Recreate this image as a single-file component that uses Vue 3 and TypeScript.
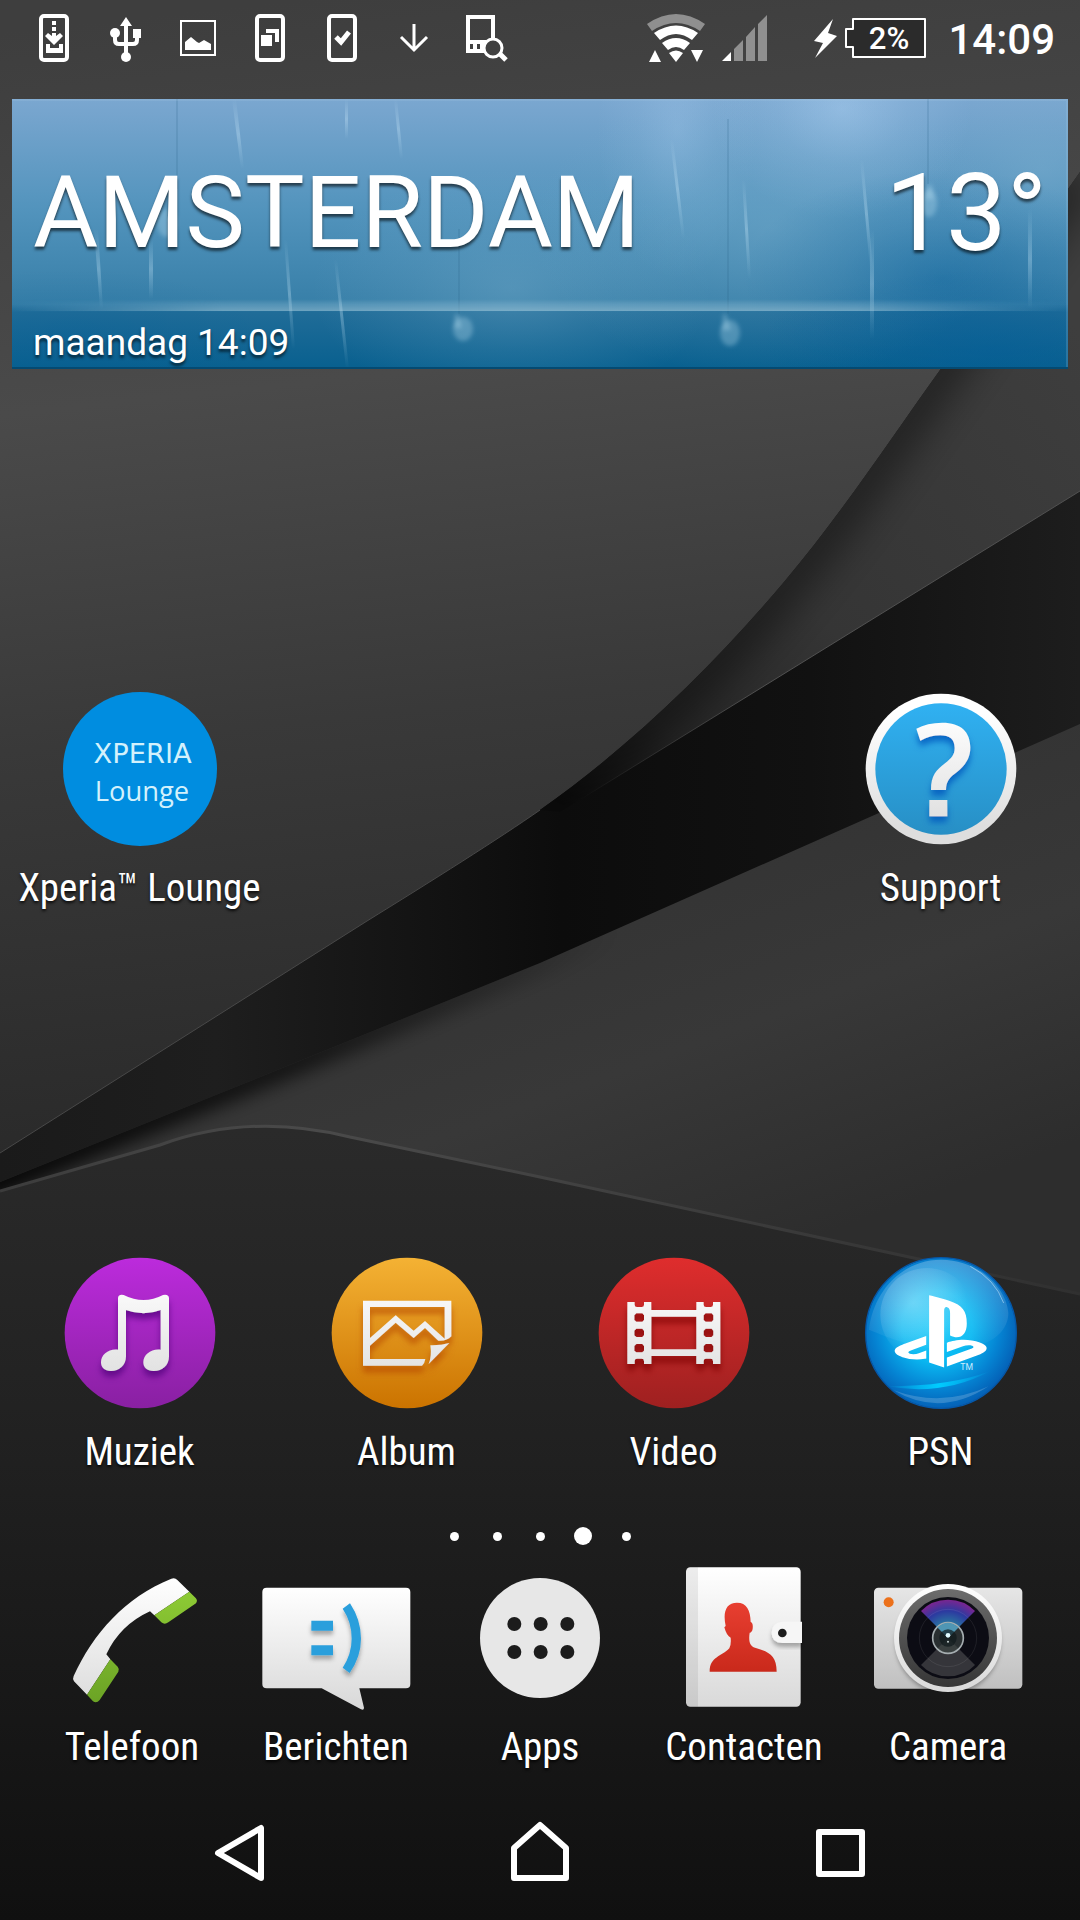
<script setup lang="ts">
import { ref } from 'vue'

const city = 'AMSTERDAM'
const temperature = '13°'
const day = 'maandag 14:09'
const clock = '14:09'
const pages = [1, 2, 3, 4, 5]
const activePage = ref(4)
</script>

<template>
  <div class="phone">
    <svg class="wallpaper" viewBox="0 0 1080 1920" preserveAspectRatio="none" aria-hidden="true">
      <defs>
        <linearGradient id="wpLeft" gradientUnits="userSpaceOnUse" x1="300" y1="0" x2="420" y2="1150">
          <stop offset="0" stop-color="#3e3e3e" />
          <stop offset=".33" stop-color="#4a4a4a" />
          <stop offset=".62" stop-color="#393939" />
          <stop offset="1" stop-color="#292929" />
        </linearGradient>
        <linearGradient id="wpMid" gradientUnits="userSpaceOnUse" x1="1080" y1="330" x2="560" y2="800">
          <stop offset="0" stop-color="#3e3e3e" />
          <stop offset=".55" stop-color="#353535" />
          <stop offset=".82" stop-color="#262626" />
          <stop offset="1" stop-color="#0d0d0d" />
        </linearGradient>
        <linearGradient id="wpBand" gradientUnits="userSpaceOnUse" x1="0" y1="0" x2="1080" y2="0">
          <stop offset="0" stop-color="#1a1a1a" />
          <stop offset=".2" stop-color="#1e1e1e" />
          <stop offset=".52" stop-color="#0c0c0c" />
          <stop offset=".75" stop-color="#111" />
          <stop offset="1" stop-color="#1d1d1d" />
        </linearGradient>
        <linearGradient id="wpLow" gradientUnits="userSpaceOnUse" x1="560" y1="900" x2="700" y2="1280">
          <stop offset="0" stop-color="#343434" />
          <stop offset=".45" stop-color="#383838" />
          <stop offset="1" stop-color="#2d2d2d" />
        </linearGradient>
        <linearGradient id="wpShade" gradientUnits="userSpaceOnUse" x1="0" y1="0" x2="620" y2="0">
          <stop offset="0" stop-color="#000" stop-opacity=".9" />
          <stop offset=".5" stop-color="#000" stop-opacity=".6" />
          <stop offset="1" stop-color="#000" stop-opacity="0" />
        </linearGradient>
        <linearGradient id="wpLine" gradientUnits="userSpaceOnUse" x1="580" y1="0" x2="760" y2="0">
          <stop offset="0" stop-color="#505050" stop-opacity="0" />
          <stop offset="1" stop-color="#505050" />
        </linearGradient>
        <linearGradient id="wpBottom" gradientUnits="userSpaceOnUse" x1="0" y1="1130" x2="0" y2="1920">
          <stop offset="0" stop-color="#2a2a2a" />
          <stop offset=".35" stop-color="#222" />
          <stop offset="1" stop-color="#101010" />
        </linearGradient>
        <linearGradient id="wpRim" x1="0" y1="0" x2="1" y2="0">
          <stop offset="0" stop-color="#3c3c3c" />
          <stop offset=".3" stop-color="#4a4a4a" />
          <stop offset="1" stop-color="#303030" />
        </linearGradient>
        <filter id="wpSoft" x="-20%" y="-20%" width="140%" height="140%"><feGaussianBlur stdDeviation="20" /></filter>
        <filter id="wpSoft2" x="-20%" y="-20%" width="140%" height="140%"><feGaussianBlur stdDeviation="9" /></filter>
        <clipPath id="clipMid"><path d="M1080 172L940 370C892 437 842 513 784 582C715 664 630 747 540 810L560 812 1080 491Z" /></clipPath>
        <clipPath id="clipLow"><path d="M1080 724L540 963 270 1073 0 1182V1320H1080Z" /></clipPath>
      </defs>
      <rect width="1080" height="1920" fill="url(#wpLeft)" />
      <path d="M0 1153L367 921C430 882 500 838 540 810C630 747 715 664 784 582C842 513 892 437 940 370L1080 172V800L0 1195Z" fill="url(#wpBand)" />
      <g clip-path="url(#clipMid)">
        <rect x="500" y="160" width="580" height="680" fill="url(#wpMid)" />
        <path d="M1080 172L940 370C892 437 842 513 784 582C715 664 630 747 540 810" fill="none" stroke="#000" stroke-opacity=".45" stroke-width="44" filter="url(#wpSoft)" />
      </g>
      <path d="M0 1153L367 921C430 882 500 838 540 810" fill="none" stroke="#484848" stroke-width="1" />
      <path d="M560 812L1080 491" fill="none" stroke="url(#wpLine)" stroke-width="1" />
      <path d="M1080 724L540 963 270 1073 0 1182V1320H1080Z" fill="url(#wpLow)" />
      <g clip-path="url(#clipLow)">
        <path d="M700 892L540 963 270 1073 -20 1190" fill="none" stroke="url(#wpShade)" stroke-width="26" filter="url(#wpSoft2)" />
      </g>
      <path d="M0 1191L160 1145Q250 1112 350 1137L540 1177 1080 1294V1920H0Z" fill="url(#wpBottom)" />
      <path d="M0 1191L160 1145Q250 1112 350 1137L540 1177 1080 1294" fill="none" stroke="url(#wpRim)" stroke-width="3" />
    </svg>

    <header class="status">
      <div class="notices">
        <svg viewBox="0 0 48 48" role="img" aria-label="Download naar telefoon">
          <rect x="11" y="2" width="26" height="44" rx="3" fill="none" stroke="#fff" stroke-width="4" />
          <path d="M22 7h4v4h-4zM22 13h4v4h-4zM22 19h4v3l4-3 3 3-9 9-9-9 3-3 4 3zM16 30h4v4h9v-4h4v9H16z" fill="#fff" />
        </svg>
        <svg viewBox="0 0 48 48" role="img" aria-label="USB">
          <path d="M24 3l6 9h-4v30h-4V12h-4z" fill="#fff" />
          <path d="M13 19v7q0 4 4 4h14q4 0 4-4v-7" fill="none" stroke="#fff" stroke-width="4" />
          <circle cx="13" cy="19" r="5" fill="#fff" /><path d="M31 15h8v9h-8z" fill="#fff" /><circle cx="24" cy="43" r="5" fill="#fff" />
        </svg>
        <svg viewBox="0 0 48 48" role="img" aria-label="Schermafbeelding">
          <rect x="7" y="7" width="34" height="34" fill="none" stroke="#fff" stroke-width="2" />
          <path d="M11 36v-8l6-5 6 5 2 1 5-3 7 4v6z" fill="#fff" />
        </svg>
        <svg viewBox="0 0 48 48" role="img" aria-label="Vensters">
          <rect x="11" y="2" width="26" height="44" rx="3" fill="none" stroke="#fff" stroke-width="4" />
          <path d="M15 21h11v11H15zM20 15h13v13h-4v-9h-9z" fill="#fff" />
        </svg>
        <svg viewBox="0 0 48 48" role="img" aria-label="Voltooid">
          <rect x="11" y="2" width="26" height="44" rx="3" fill="none" stroke="#fff" stroke-width="4" />
          <path d="M18 23l5 5 8-10" fill="none" stroke="#fff" stroke-width="5" />
        </svg>
        <svg viewBox="0 0 48 48" role="img" aria-label="Download">
          <path d="M24 10v26M11 23l13 13 13-13" fill="none" stroke="#fff" stroke-width="3" />
        </svg>
        <svg viewBox="0 0 48 48" role="img" aria-label="Apparaat zoeken">
          <path d="M31 25V3H6v34h17M4 28h20M13 28v9M20 28v9" fill="none" stroke="#fff" stroke-width="4" />
          <circle cx="31" cy="34" r="9" fill="none" stroke="#fff" stroke-width="3" />
          <path d="M38 40l6 6" stroke="#fff" stroke-width="5" />
        </svg>
      </div>
      <div class="indicators">
        <svg class="wifi" viewBox="0 0 60 50" role="img" aria-label="Wifi">
          <path d="M1 11Q30-9 59 11L54 18Q30 2 6 18Z" fill="#8f8f8f" />
          <path d="M8 20Q30 5 52 20L46 27Q30 15 14 27ZM16 30Q30 20 44 30L38 37Q30 31 22 37ZM23 40Q30 35 37 40L30 49ZM3 49l6-12 6 12zM45 37h12l-6 12z" fill="#fff" />
        </svg>
        <svg class="signal" viewBox="0 0 46 46" role="img" aria-label="Mobiel signaal">
          <path d="M0 46L9 37V46Z" fill="#fff" />
          <path d="M12 46V34L21 25V46ZM24 46V22L33 12V46ZM36 46V9L45 0V46Z" fill="#909090" />
        </svg>
        <svg class="bolt" viewBox="0 0 23 39" role="img" aria-label="Opladen"><path d="M19 0L0 22l9 2L1 39 23 17l-9-3z" fill="#fff" /></svg>
        <svg class="battery" viewBox="0 0 82 40" role="img" aria-label="Batterij 2%">
          <path d="M8 1H80V39H8V29H1V11H8Z" fill="#2b2b2b" stroke="#fff" stroke-width="2" stroke-linejoin="round" />
          <text x="44" y="31" text-anchor="middle">2%</text>
        </svg>
        <time class="clock">{{ clock }}</time>
      </div>
    </header>

    <main class="workspace">
      <section class="weather">
        <svg class="rain" viewBox="0 0 1056 270" preserveAspectRatio="none" aria-hidden="true">
          <defs>
            <linearGradient id="sky" x1="0" y1="0" x2="0" y2="1">
              <stop offset="0" stop-color="#7ba7d0" /><stop offset=".4" stop-color="#5394bd" />
              <stop offset=".76" stop-color="#377fa8" /><stop offset=".79" stop-color="#206c98" /><stop offset="1" stop-color="#08608f" />
            </linearGradient>
            <radialGradient id="glow"><stop offset="0" stop-color="#a9cdf0" stop-opacity=".55" /><stop offset=".5" stop-color="#a9cdf0" stop-opacity=".2" /><stop offset="1" stop-color="#a9cdf0" stop-opacity="0" /></radialGradient>
            <radialGradient id="mist"><stop offset="0" stop-color="#7fb2cf" stop-opacity=".35" /><stop offset=".5" stop-color="#7fb2cf" stop-opacity=".15" /><stop offset="1" stop-color="#7fb2cf" stop-opacity="0" /></radialGradient>
            <radialGradient id="deep"><stop offset="0" stop-color="#005b97" stop-opacity=".4" /><stop offset=".5" stop-color="#005b97" stop-opacity=".16" /><stop offset="1" stop-color="#005b97" stop-opacity="0" /></radialGradient>
            <linearGradient id="streak" x1="0" y1="0" x2="0" y2="1"><stop offset="0" stop-color="#d5f0ff" stop-opacity="0" /><stop offset=".5" stop-color="#d5f0ff" stop-opacity=".3" /><stop offset="1" stop-color="#d5f0ff" stop-opacity="0" /></linearGradient>
            <linearGradient id="shine" x1="0" y1="0" x2="0" y2="1"><stop offset="0" stop-color="#b8d8e6" stop-opacity="0" /><stop offset="1" stop-color="#b8d8e6" stop-opacity=".5" /></linearGradient>
            <linearGradient id="fade" x1="0" y1="0" x2="1" y2="0"><stop offset="0" stop-color="#fff" stop-opacity="0" /><stop offset=".2" stop-color="#fff" /><stop offset=".8" stop-color="#fff" /><stop offset="1" stop-color="#fff" stop-opacity="0" /></linearGradient>
            <mask id="fadeMask"><rect width="1056" height="270" fill="url(#fade)" /></mask>
            <filter id="dropSoft" x="-10%" y="-10%" width="120%" height="120%"><feGaussianBlur stdDeviation="2" /></filter>
          </defs>
          <rect width="1056" height="270" fill="url(#sky)" />
          <ellipse cx="830" cy="10" rx="130" ry="110" fill="url(#glow)" />
          <ellipse cx="665" cy="30" rx="80" ry="150" fill="url(#glow)" opacity=".6" />
          <ellipse cx="500" cy="190" rx="200" ry="120" fill="url(#mist)" />
          <ellipse cx="760" cy="130" rx="240" ry="150" fill="url(#mist)" />
          <ellipse cx="1030" cy="70" rx="110" ry="90" fill="url(#mist)" />
          <ellipse cx="930" cy="180" rx="200" ry="110" fill="url(#deep)" />
          <ellipse cx="980" cy="250" rx="240" ry="80" fill="url(#deep)" />
          <ellipse cx="60" cy="240" rx="200" ry="70" fill="url(#deep)" opacity=".6" />
          <g>
            <path fill="url(#streak)" d="M220 0h4l8 70h-3z" /><path fill="url(#streak)" d="M382 0h3l6 60h-3z" />
            <path fill="url(#streak)" d="M82 130h4l5 80h-3z" /><path fill="url(#streak)" d="M137 140h4v60h-4z" />
            <path fill="url(#streak)" d="M658 40h3l12 100h-3z" /><path fill="url(#streak)" d="M730 80h3l6 100h-3z" />
            <path fill="url(#streak)" d="M848 60h3l10 110h-3z" /><path fill="url(#streak)" d="M858 130h4v110h-4z" />
            <path fill="url(#streak)" d="M272 140h3l8 110h-3z" /><path fill="url(#streak)" d="M322 160h3l12 110h-3z" />
            <path fill="url(#streak)" d="M1016 110h4v100h-4z" /><path fill="url(#streak)" d="M333 0h3v40h-3z" />
          </g>
          <path d="M165 0V90M447 130V215M716 20V215M916 0V85" stroke="#235e83" stroke-opacity=".16" stroke-width="2" />
          <g fill="#bfe3f5" fill-opacity=".3" filter="url(#dropSoft)">
            <ellipse cx="451" cy="230" rx="10" ry="12" /><ellipse cx="718" cy="234" rx="10" ry="13" />
            <ellipse cx="917" cy="104" rx="8" ry="14" /><ellipse cx="155" cy="124" rx="10" ry="14" />
            <path d="M443 215h3l4 14h-8zM711 215h3l5 16h-9zM916 86h4l2 14h-8z" />
          </g>
          <rect y="200" width="1056" height="12" fill="url(#shine)" mask="url(#fadeMask)" />
          <path d="M20 213H1030" stroke="#124767" stroke-width="1" mask="url(#fadeMask)" />
          <path d="M0 1H1056M1055 0V270" stroke="#a8cce6" stroke-opacity=".2" stroke-width="2" />
          <path d="M0 269H1056" stroke="#044a72" stroke-width="2" />
        </svg>
        <div class="now">
          <span class="city">{{ city }}</span>
          <span class="temp">{{ temperature }}</span>
        </div>
        <p class="day">{{ day }}</p>
      </section>

      <button class="app lounge" type="button">
        <svg viewBox="188 36 462 462" aria-hidden="true">
          <circle cx="419" cy="267" r="231" fill="#008de0" />
          <text class="mark wide" x="427" y="250" text-anchor="middle">XPERIA</text>
          <text class="mark" x="425" y="363" text-anchor="middle">Lounge</text>
        </svg>
        <span>Xperia™ Lounge</span>
      </button>

      <button class="app support" type="button">
        <svg viewBox="71 36 462 462" aria-hidden="true">
          <defs>
            <linearGradient id="white" gradientUnits="userSpaceOnUse" x1="0" y1="100" x2="0" y2="440"><stop offset="0" stop-color="#fff" /><stop offset="1" stop-color="#dedede" /></linearGradient>
            <linearGradient id="help" x1="0" y1="0" x2="0" y2="1"><stop offset="0" stop-color="#30b1f2" /><stop offset="1" stop-color="#278fc5" /></linearGradient>
            <filter id="blueDrop" x="-30%" y="-30%" width="160%" height="170%"><feDropShadow dx="0" dy="18" stdDeviation="9" flood-color="#0059bd" flood-opacity=".8" /></filter>
          </defs>
          <circle cx="302" cy="267" r="226" fill="url(#white)" />
          <circle cx="302" cy="267" r="197" fill="url(#help)" />
          <g filter="url(#blueDrop)">
            <path d="M228 146Q260 128 306 128C362 128 390 156 390 202C390 238 372 258 350 276C328 292 317 304 317 330H272C272 286 288 270 314 250C334 234 343 224 343 204C343 178 328 166 300 166Q270 166 240 182Z" fill="url(#white)" />
            <rect x="267" y="360" width="54" height="49" fill="url(#white)" />
          </g>
        </svg>
        <span>Support</span>
      </button>

      <button class="app music" type="button">
        <svg viewBox="68 49 462 462" aria-hidden="true">
          <defs>
            <linearGradient id="purple" x1="0" y1="0" x2="0" y2="1"><stop offset="0" stop-color="#bc2bdc" /><stop offset="1" stop-color="#8920a2" /></linearGradient>
            <filter id="purpleDrop" x="-30%" y="-30%" width="160%" height="170%"><feDropShadow dx="0" dy="18" stdDeviation="9" flood-color="#50007a" flood-opacity=".7" /></filter>
          </defs>
          <circle cx="299" cy="280" r="226" fill="url(#purple)" />
          <path filter="url(#purpleDrop)" d="M233 176Q233 163 250 166Q310 196 368 166Q386 163 386 176V350C386 378 366 394 340 394C320 394 309 383 309 368C309 344 334 326 361 330V211Q310 231 257 211V350C257 378 236 394 212 394C193 394 182 383 182 368C182 344 206 326 233 330Z" fill="url(#white)" />
        </svg>
        <span>Muziek</span>
      </button>

      <button class="app album" type="button">
        <svg viewBox="868 49 462 462" aria-hidden="true">
          <defs>
            <linearGradient id="orange" x1="0" y1="0" x2="0" y2="1"><stop offset="0" stop-color="#f4b234" /><stop offset="1" stop-color="#cb7300" /></linearGradient>
            <filter id="orangeDrop" x="-30%" y="-30%" width="160%" height="170%"><feDropShadow dx="0" dy="20" stdDeviation="9" flood-color="#b84c00" flood-opacity=".75" /></filter>
          </defs>
          <circle cx="1099" cy="280" r="226" fill="url(#orange)" />
          <g filter="url(#orangeDrop)" fill="url(#white)">
            <path fill-rule="evenodd" d="M967 183H1232V290Q1218 305 1193 303L1153 265 1119 295 1065 249 988 318V358H1154Q1152 372 1144 378H967ZM988 202V295L1065 227 1119 273 1153 244 1212 297V202Z" />
            <path d="M1169 317Q1200 318 1226 310L1164 373Q1174 350 1169 317Z" />
          </g>
        </svg>
        <span>Album</span>
      </button>

      <button class="app video" type="button">
        <svg viewBox="50 49 462 462" aria-hidden="true">
          <defs>
            <linearGradient id="red" x1="0" y1="0" x2="0" y2="1"><stop offset="0" stop-color="#df2d2d" /><stop offset="1" stop-color="#9e2020" /></linearGradient>
            <filter id="redDrop" x="-30%" y="-30%" width="160%" height="170%"><feDropShadow dx="0" dy="20" stdDeviation="9" flood-color="#7b0505" flood-opacity=".7" /></filter>
          </defs>
          <circle cx="281" cy="280" r="226" fill="url(#red)" />
          <path filter="url(#redDrop)" fill-rule="evenodd" fill="url(#white)" d="M141 187H163V195Q163 202 170 202H184Q191 202 191 195V187H213V211H348V187H370V195Q370 202 377 202H391Q398 202 398 195V187H420V373H398V364Q398 357 391 357H377Q370 357 370 364V373H348V349H213V373H191V364Q191 357 184 357H170Q163 357 163 364V373H141ZM213 231V329H348V231ZM168 221H186L191 227V241L186 246H168L162 241V227ZM168 267H186L191 273V287L186 292H168L162 287V273ZM168 313H186L191 319V333L186 338H168L162 333V319ZM376 221H394L399 227V241L394 246H376L370 241V227ZM376 267H394L399 273V287L394 292H376L370 287V273ZM376 313H394L399 319V333L394 338H376L370 333V319Z" />
        </svg>
        <span>Video</span>
      </button>

      <button class="app psn" type="button">
        <svg viewBox="851 49 462 462" aria-hidden="true">
          <defs>
            <radialGradient id="orb" gradientUnits="userSpaceOnUse" cx="1070" cy="260" r="250"><stop offset="0" stop-color="#0fc8fa" /><stop offset=".42" stop-color="#0ab9f2" /><stop offset=".75" stop-color="#0584d3" /><stop offset="1" stop-color="#045fb5" /></radialGradient>
            <radialGradient id="orbShine" gradientUnits="userSpaceOnUse" cx="1000" cy="190" r="160"><stop offset="0" stop-color="#fff" stop-opacity=".3" /><stop offset=".6" stop-color="#fff" stop-opacity=".14" /><stop offset="1" stop-color="#fff" stop-opacity="0" /></radialGradient>
            <linearGradient id="orbTop" x1="0" y1="0" x2="0" y2="1"><stop offset="0" stop-color="#fff" stop-opacity=".25" /><stop offset="1" stop-color="#fff" stop-opacity=".02" /></linearGradient>
            <linearGradient id="arc" x1="0" y1="0" x2="1" y2="0"><stop offset="0" stop-color="#00ccff" stop-opacity="0" /><stop offset=".5" stop-color="#00ccff" /><stop offset="1" stop-color="#00ccff" stop-opacity="0" /></linearGradient>
          </defs>
          <circle cx="1082" cy="280" r="226" fill="url(#orb)" stroke="#0558aa" stroke-width="4" />
          <path d="M866 270C880 150 970 60 1082 60C1200 60 1280 150 1284 220C1284 270 1240 310 1180 320C1060 350 940 300 866 270Z" fill="url(#orbTop)" />
          <circle cx="1040" cy="225" r="140" fill="url(#orbShine)" />
          <path d="M920 440Q1090 470 1230 394Q1110 440 920 440Z" fill="url(#arc)" />
          <path d="M940 452Q1080 535 1225 440Q1085 505 940 452Z" fill="#fff" fill-opacity=".18" />
          <path d="M1170 80Q1245 120 1270 190" fill="none" stroke="#cfeeff" stroke-opacity=".5" stroke-width="3" />
          <path transform="translate(943 137) scale(11.5)" fill="#fff" d="M8.984 2.596v17.547l3.915 1.261V6.688c0-.69.304-1.151.794-.991.636.18.76.814.76 1.505v5.875c2.441 1.193 4.362-.002 4.362-3.152 0-3.237-1.126-4.675-4.438-5.827-1.307-.448-3.728-1.186-5.39-1.502zm4.656 16.241l6.296-2.275c.715-.258.826-.625.246-.818-.586-.192-1.637-.139-2.357.123l-4.205 1.5V14.98l.24-.085s1.201-.42 2.913-.615c1.696-.18 3.785.03 5.437.661 1.848.601 2.04 1.472 1.576 2.072-.465.6-1.622 1.036-1.622 1.036l-8.544 3.107V18.86zM1.807 18.6c-1.9-.545-2.214-1.668-1.352-2.32.801-.586 2.16-1.052 2.16-1.052l5.615-2.013v2.313L4.205 17c-.705.271-.825.632-.239.826.586.195 1.637.15 2.343-.12L8.247 17v2.074c-.12.03-.256.044-.39.073-1.939.331-3.996.196-6.038-.479z" />
          <text class="tm" x="1140" y="392">TM</text>
        </svg>
        <span>PSN</span>
      </button>
    </main>

    <div class="pager">
      <button
        v-for="page in pages"
        :key="page"
        type="button"
        :class="{ active: page === activePage }"
        :aria-label="`Pagina ${page}`"
        @click="activePage = page"
      ></button>
    </div>

    <section class="dock">
      <button class="app" type="button">
        <svg viewBox="51 159 450 450" aria-hidden="true">
          <defs>
            <linearGradient id="handset" gradientUnits="userSpaceOnUse" x1="0" y1="204" x2="0" y2="580"><stop offset="0" stop-color="#fff" /><stop offset="1" stop-color="#dcdcdc" /></linearGradient>
            <linearGradient id="green" gradientUnits="userSpaceOnUse" x1="0" y1="240" x2="0" y2="580"><stop offset="0" stop-color="#8ecb35" /><stop offset="1" stop-color="#6ba325" /></linearGradient>
          </defs>
          <path d="M394 206Q405 202 412 210L448 245 343 316 330 304Q240 345 199 433L211 448 141 554 102 514Q97 507 101 498C160 370 255 262 394 206Z" fill="url(#handset)" />
          <path d="M448 245L467 264Q474 271 468 280L385 337Q374 345 364 337L343 316ZM211 448L233 470Q239 477 235 485L179 570Q170 581 159 574L141 554Z" fill="url(#green)" />
        </svg>
        <span>Telefoon</span>
      </button>

      <button class="app" type="button">
        <svg viewBox="663 159 450 450" aria-hidden="true">
          <defs>
            <linearGradient id="bubble" gradientUnits="userSpaceOnUse" x1="0" y1="233" x2="0" y2="600"><stop offset="0" stop-color="#fff" /><stop offset="1" stop-color="#d8d8d8" /></linearGradient>
            <filter id="greyDrop" x="-40%" y="-20%" width="180%" height="150%"><feDropShadow dx="0" dy="12" stdDeviation="6" flood-color="#000" flood-opacity=".3" /></filter>
          </defs>
          <path d="M680 233H1098Q1111 233 1111 246V522Q1111 535 1098 535H958L972 593Q972 602 963 598L845 535H680Q667 535 667 522V246Q667 233 680 233Z" fill="url(#bubble)" />
          <g filter="url(#greyDrop)" fill="#2b9fdc">
            <path d="M814 332H879V362H814ZM814 406H879V436H814ZM930 280Q963 330 963 386Q963 440 929 489L908 473Q935 432 935 386Q935 336 908 296Z" />
          </g>
        </svg>
        <span>Berichten</span>
      </button>

      <button class="app" type="button">
        <svg viewBox="75 159 450 450" aria-hidden="true">
          <circle cx="300" cy="384" r="180" fill="#e7e7e7" />
          <g fill="#1c1c1c">
            <circle cx="223" cy="342" r="21" /><circle cx="302" cy="342" r="21" /><circle cx="382" cy="342" r="21" />
            <circle cx="223" cy="426" r="21" /><circle cx="302" cy="426" r="21" /><circle cx="382" cy="426" r="21" />
          </g>
        </svg>
        <span>Apps</span>
      </button>

      <button class="app" type="button">
        <svg viewBox="687 159 450 450" aria-hidden="true">
          <defs>
            <linearGradient id="book" x1="0" y1="0" x2="0" y2="1"><stop offset="0" stop-color="#fff" /><stop offset="1" stop-color="#d9d9d9" /></linearGradient>
            <linearGradient id="person" x1="0" y1="0" x2="0" y2="1"><stop offset="0" stop-color="#e83f31" /><stop offset="1" stop-color="#c9291b" /></linearGradient>
          </defs>
          <rect x="738" y="172" width="344" height="418" rx="13" fill="url(#book)" />
          <path d="M774 172H751Q738 172 738 185V577Q738 590 751 590H774Z" fill="#000" fill-opacity=".07" />
          <path d="M891 278C920 278 931 300 932 336Q940 338 938 356Q936 367 929 368C925 395 930 408 945 413C985 425 1010 435 1010 485H809C809 440 845 440 868 415Q874 405 872 383Q860 378 853 352L857 348C848 306 858 278 891 278Z" fill="url(#person)" />
          <path filter="url(#greyDrop)" d="M1086 335H1027Q995 338 995 368Q995 398 1027 399H1086Z" fill="#f6f6f6" />
          <circle cx="1027" cy="369" r="13" fill="#1c1c1c" />
        </svg>
        <span>Contacten</span>
      </button>

      <button class="app" type="button">
        <svg viewBox="159 159 450 450" aria-hidden="true">
          <defs>
            <linearGradient id="body" x1="0" y1="0" x2="0" y2="1"><stop offset="0" stop-color="#e6e6e6" /><stop offset="1" stop-color="#c0c0c0" /></linearGradient>
            <linearGradient id="barrel" x1="0" y1="0" x2="0" y2="1"><stop offset="0" stop-color="#6c6c6c" /><stop offset="1" stop-color="#363636" /></linearGradient>
            <radialGradient id="beam" gradientUnits="userSpaceOnUse" cx="384" cy="384" r="116"><stop offset="0" stop-color="#4fa5bd" /><stop offset=".4" stop-color="#2a72a0" /><stop offset=".7" stop-color="#2c3aa0" /><stop offset="1" stop-color="#7d2590" /></radialGradient>
            <clipPath id="bodyClip"><rect x="162" y="233" width="445" height="303" rx="13" /></clipPath>
          </defs>
          <rect x="162" y="233" width="445" height="303" rx="13" fill="url(#body)" />
          <g clip-path="url(#bodyClip)"><circle cx="384" cy="384" r="158" filter="url(#greyDrop)" fill="#999" /></g>
          <circle cx="206" cy="277" r="15" fill="#ec711b" />
          <circle cx="384" cy="384" r="162" fill="url(#book)" />
          <circle cx="384" cy="384" r="147" fill="url(#barrel)" />
          <circle cx="384" cy="384" r="123" fill="#0c0c14" />
          <path d="M384 384L303 303Q335 269 384 269Q433 269 465 303Z" fill="url(#beam)" />
          <path d="M384 384L303 465Q335 499 384 499Q433 499 465 465Z" fill="#35353a" />
          <circle cx="384" cy="384" r="86" fill="none" stroke="#fff" stroke-opacity=".08" stroke-width="3" />
          <circle cx="384" cy="384" r="46" fill="#3e4745" fill-opacity=".6" stroke="#a5adb0" stroke-width="5" />
          <path d="M384 384L352 352Q384 324 416 352Z" fill="#4f96b4" />
          <circle cx="384" cy="384" r="26" fill="#101a1c" fill-opacity=".7" />
          <circle cx="384" cy="376" r="7" fill="#e2fbff" /><circle cx="384" cy="395" r="3" fill="#c4d0d0" />
        </svg>
        <span>Camera</span>
      </button>
    </section>

    <nav class="keys">
      <button type="button" aria-label="Terug">
        <svg viewBox="0 0 64 64" aria-hidden="true"><path d="M53 7V57L10 32Z" /></svg>
      </button>
      <button type="button" aria-label="Startscherm">
        <svg viewBox="0 0 64 64" aria-hidden="true"><path d="M32 4L58 27V57H6V27Z" /></svg>
      </button>
      <button type="button" aria-label="Recente apps">
        <svg viewBox="0 0 64 64" aria-hidden="true"><path d="M11 11H54V53H11Z" /></svg>
      </button>
    </nav>
  </div>
</template>

<style>
body {
  margin: 0;
  background: #151515;
}
</style>

<style scoped>
.phone {
  position: relative;
  display: flex;
  flex-direction: column;
  min-height: 100vh;
  box-sizing: border-box;
  overflow: hidden;
  color: #fff;
  font-family: Roboto, "Liberation Sans", sans-serif;
}
.wallpaper {
  position: absolute;
  inset: 0;
  width: 100%;
  height: 100%;
}
.status,
.workspace,
.pager,
.dock,
.keys {
  position: relative;
}
button {
  border: 0;
  padding: 0;
  background: none;
  color: inherit;
  font: inherit;
  cursor: pointer;
}
svg {
  display: block;
}

.status {
  display: flex;
  justify-content: space-between;
  align-items: center;
  height: 76px;
  padding: 0 25px 0 30px;
}
.notices {
  display: flex;
  gap: 24px;
}
.notices svg {
  width: 48px;
  height: 48px;
}
.indicators {
  display: flex;
  align-items: center;
}
.wifi {
  width: 60px;
  height: 50px;
  margin-right: 16px;
}
.signal {
  width: 46px;
  height: 46px;
  margin-right: 46px;
}
.bolt {
  width: 23px;
  height: 39px;
  margin-right: 8px;
}
.battery {
  width: 82px;
  height: 40px;
  margin-right: 21px;
}
.battery text {
  fill: #fff;
  font-size: 31px;
  font-weight: 500;
}
.clock {
  padding-top: 4px;
  font-size: 42px;
  line-height: 48px;
  font-weight: 500;
}

.workspace {
  flex: 1;
  display: grid;
  grid-template-columns: repeat(4, 1fr);
  grid-template-rows: repeat(5, minmax(282px, 1fr));
  padding: 17px 6px 0;
}
.weather {
  grid-area: 1 / 1 / 2 / 5;
  position: relative;
  display: flex;
  flex-direction: column;
  margin: 6px;
  text-shadow: 0 3px 3px rgba(0, 0, 0, 0.6);
}
.rain {
  position: absolute;
  inset: 0;
  width: 100%;
  height: 100%;
}
.now {
  position: relative;
  flex: 1;
  display: flex;
  justify-content: space-between;
  align-items: center;
  padding: 10px 21px 0;
}
.city {
  font-size: 100px;
  line-height: 120px;
}
.temp {
  font-size: 108px;
  line-height: 120px;
}
.day {
  position: relative;
  margin: 0;
  padding: 0 21px;
  font-size: 37px;
  line-height: 52px;
}

.app {
  display: flex;
  flex-direction: column;
  align-items: center;
  gap: 18px;
  font-family: "Roboto Condensed", "Liberation Sans Narrow", Roboto, sans-serif;
  font-size: 39px;
  line-height: 48px;
  text-shadow: 0 2px 3px rgba(0, 0, 0, 0.8);
  white-space: nowrap;
}
.workspace .app {
  padding-top: 35px;
}
.workspace .app svg {
  width: 154px;
  height: 154px;
}
.mark {
  fill: #d3f1fc;
  font-family: "Open Sans", "Noto Sans", sans-serif;
  font-size: 82px;
  text-shadow: none;
}
.mark.wide {
  font-family: "DejaVu Sans", sans-serif;
}
.tm {
  fill: #c8ecff;
  font-family: Roboto, sans-serif;
  font-size: 26px;
  text-shadow: none;
}
.lounge {
  grid-area: 3 / 1;
}
.support {
  grid-area: 3 / 4;
}
.music {
  grid-area: 5 / 1;
}
.album {
  grid-area: 5 / 2;
}
.video {
  grid-area: 5 / 3;
}
.psn {
  grid-area: 5 / 4;
}

.pager {
  display: flex;
  justify-content: center;
  height: 54px;
  padding-top: 6px;
}
.pager button {
  display: flex;
  align-items: center;
  justify-content: center;
  width: 43px;
}
.pager button::before {
  content: "";
  width: 9px;
  height: 9px;
  border-radius: 50%;
  background: #fff;
}
.pager button.active::before {
  width: 18px;
  height: 18px;
}

.dock {
  display: grid;
  grid-template-columns: repeat(5, 1fr);
  padding: 0 30px 15px;
}
.dock .app {
  gap: 10px;
}
.dock .app svg {
  width: 150px;
  height: 150px;
}

.keys {
  display: grid;
  grid-template-columns: repeat(3, 1fr);
  height: 134px;
  padding: 0 90px;
}
.keys button {
  display: grid;
  place-items: center;
}
.keys svg {
  width: 64px;
  height: 64px;
  fill: none;
  stroke: #fff;
  stroke-width: 6px;
  stroke-linejoin: round;
}
</style>
